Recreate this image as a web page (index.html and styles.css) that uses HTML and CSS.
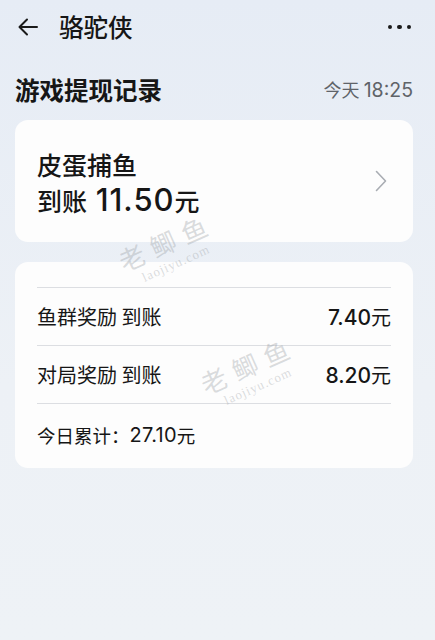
FILE: index.html
```html
<!DOCTYPE html>
<html lang="zh-CN">
<head>
  <meta charset="UTF-8" />
  <meta name="viewport" content="width=device-width, initial-scale=1.0" />
  <title>骆驼侠</title>
  <link rel="stylesheet" href="styles.css">
</head>
<body>
  <!-- Top bar -->
  <div class="topbar">
    <svg class="back" width="22" height="22" viewBox="0 0 22 22">
      <path d="M20 11H3M10 3.5L2.5 11 10 18.5" fill="none" stroke="#1a1a1a" stroke-width="2" stroke-linecap="round" stroke-linejoin="round"/>
    </svg>
    <div class="title">骆驼侠</div>
    <div class="more"><span></span><span></span><span></span></div>
  </div>

  <!-- Section header -->
  <div class="section">
    <div class="section-title">游戏提现记录</div>
    <div class="section-time">今天 <span class="num">18:25</span></div>
  </div>

  <!-- Summary card -->
  <div class="card summary">
    <div class="summary-text">
      <div>皮蛋捕鱼</div>
      <div>到账 <span class="num big">11.50</span>元</div>
    </div>
    <svg class="chevron" width="12" height="22" viewBox="0 0 12 22">
      <path d="M1.5 1.5L10.5 11 1.5 20.5" fill="none" stroke="#a9adb3" stroke-width="1.6" stroke-linecap="round" stroke-linejoin="round"/>
    </svg>
  </div>

  <!-- Detail card -->
  <div class="card detail">
    <div class="row">
      <span>鱼群奖励 到账</span>
      <span class="amount"><span class="num">7.40</span>元</span>
    </div>
    <div class="row">
      <span>对局奖励 到账</span>
      <span class="amount"><span class="num">8.20</span>元</span>
    </div>
    <div class="total">今日累计：<span class="num">27.10</span>元</div>
  </div>

  <!-- Watermarks -->
  <div class="wm wm1"><div class="wm-cn">老鲫鱼</div><div class="wm-en">laojiyu.com</div></div>
  <div class="wm wm2"><div class="wm-cn">老鲫鱼</div><div class="wm-en">laojiyu.com</div></div>
</body>
</html>
```

FILE: styles.css
```css
body {
  margin: 0;
  width: 435px;
  height: 640px;
  overflow: hidden;
  position: relative;
  background: linear-gradient(180deg, #e6ecf5, #edf1f6 60%, #eef2f6);
  font-family: "Noto Sans CJK SC", "Noto Sans", sans-serif;
  color: #161616;
}

.num {
  font-family: Inter, "Noto Sans", sans-serif;
}

.topbar {
  display: flex;
  align-items: center;
  height: 54px;
  padding: 0 20px 0 17px;
}

.back {
  margin-right: 20px;
}

.title {
  flex: 1;
  font-size: 24.5px;
  font-weight: 500;
  margin-top: -2px;
}

.more {
  display: flex;
  gap: 5px;
  margin-right: 4px;
}

.more span {
  width: 4.5px;
  height: 4.5px;
  border-radius: 50%;
  background: #1a1a1a;
}

.section {
  display: flex;
  align-items: center;
  justify-content: space-between;
  padding: 16px 22px 0 15px;
  height: 38px;
}

.section-title {
  font-size: 24.5px;
  font-weight: 700;
}

.section-time {
  font-size: 18px;
  color: #5f6368;
}

.section-time .num {
  font-size: 19.5px;
}

.card {
  margin: 0 22px 0 15px;
  background: #fdfdfd;
  border-radius: 13px;
}

.summary {
  margin-top: 12px;
  height: 122px;
  display: flex;
  align-items: center;
  justify-content: space-between;
  padding: 0 26px 0 22px;
  box-sizing: border-box;
}

.summary-text {
  font-size: 25px;
  font-weight: 500;
  line-height: 35px;
  padding-top: 2px;
}

.big {
  font-size: 31px;
  letter-spacing: 1px;
  margin-left: 3px;
}

.detail {
  margin-top: 20px;
  height: 206px;
  padding: 25px 22px 0 22px;
  box-sizing: border-box;
}

.row {
  display: flex;
  justify-content: space-between;
  align-items: center;
  height: 57px;
  border-top: 1px solid #dcdee2;
  font-size: 20px;
}

.amount {
  font-size: 20px;
}

.amount .num {
  font-size: 21px;
  font-weight: 500;
}

.total {
  border-top: 1px solid #dcdee2;
  height: 64px;
  display: flex;
  align-items: center;
  font-size: 18.5px;
  padding-bottom: 2px;
  box-sizing: border-box;
}

.total .num {
  font-size: 20px;
  letter-spacing: 0.3px;
}

.wm {
  position: absolute;
  color: rgba(150, 155, 160, 0.35);
  transform: rotate(-24deg);
  text-align: center;
  pointer-events: none;
}

.wm-cn {
  font-size: 26px;
  letter-spacing: 8px;
}

.wm-en {
  font-size: 13px;
  font-family: "Liberation Serif", serif;
  letter-spacing: 1px;
  margin-top: -2px;
}

.wm1 {
  left: 118px;
  top: 222px;
}

.wm2 {
  left: 200px;
  top: 345px;
}
```
